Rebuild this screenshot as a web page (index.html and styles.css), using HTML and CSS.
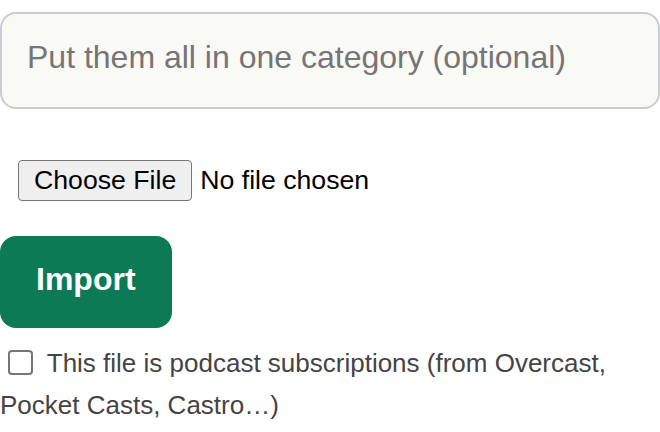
FILE: index.html
```html
<!DOCTYPE html>
<html lang="en">
<head>
<meta charset="utf-8">
<title>Import</title>
<link rel="stylesheet" href="styles.css">
</head>
<body>
<form class="import-form">
  <input class="category" type="text" placeholder="Put them all in one category (optional)">
  <div class="file-row"><input class="file-input" type="file"></div>
  <button class="import-btn" type="button">Import</button>
  <p class="podcast"><label><input class="check" type="checkbox"> This file is podcast subscriptions (from Overcast, Pocket Casts, Castro…)</label></p>
</form>
</body>
</html>
```

FILE: styles.css
```css
html, body {
  margin: 0;
  padding: 0;
  background: #ffffff;
}
body {
  font-family: "Liberation Sans", Arial, sans-serif;
  width: 660px;
}
.import-form {
  display: block;
  padding-top: 12px;
}
.category {
  display: block;
  box-sizing: border-box;
  width: 660px;
  height: 97px;
  margin: 0;
  padding: 0 23px 7px 25px;
  border: 2px solid #c9cdd3;
  border-radius: 16px;
  background: #f9f9f6;
  font-family: "Liberation Sans", Arial, sans-serif;
  font-size: 32px;
  color: #333333;
  outline: none;
}
.category::placeholder {
  color: #757575;
  opacity: 1;
}
.file-row {
  margin-top: 51px;
  padding-left: 18px;
  height: 41px;
}
.file-input {
  display: block;
  margin: 0;
  padding: 0;
  height: 41px;
  font-family: "Liberation Sans", Arial, sans-serif;
  font-size: 26.67px;
  color: #000000;
}
.file-input::file-selector-button {
  box-sizing: border-box;
  height: 41px;
  margin: 0 8px 0 0;
  padding: 0 15px;
  border: 1.5px solid #767676;
  border-radius: 4px;
  background: #efefef;
  color: #000000;
  font-family: "Liberation Sans", Arial, sans-serif;
  font-size: 26.67px;
}
.import-btn {
  display: block;
  margin: 35px 0 0;
  padding: 25px 36px 31px;
  border: none;
  border-radius: 16px;
  background: #0c7a55;
  color: #ffffff;
  font-family: "Liberation Sans", Arial, sans-serif;
  font-size: 32px;
  font-weight: bold;
  line-height: 36px;
}
.podcast {
  margin: 14px 0 0;
  font-size: 26px;
  line-height: 42.3px;
  color: #444444;
}
.check {
  appearance: none;
  -webkit-appearance: none;
  box-sizing: border-box;
  width: 25px;
  height: 25px;
  margin: 0 7px 0 8px;
  border: 2px solid #767676;
  border-radius: 4px;
  background: #ffffff;
  vertical-align: -3px;
}
```
